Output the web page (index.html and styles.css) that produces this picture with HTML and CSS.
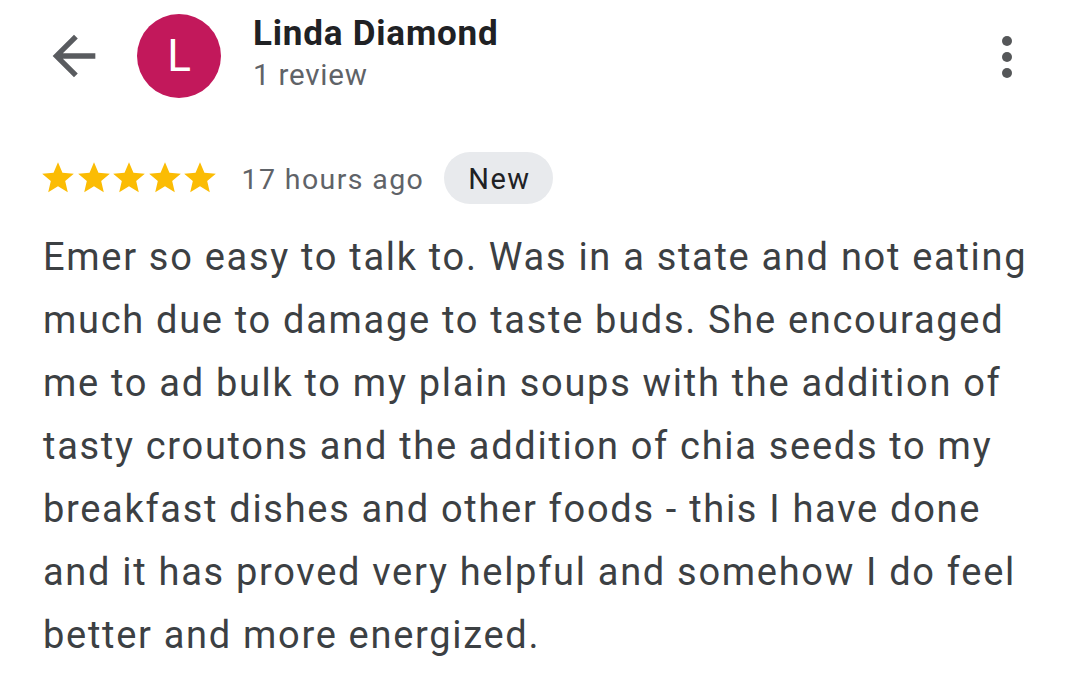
FILE: index.html
```html
<!DOCTYPE html>
<html>
<head>
<meta charset="utf-8">
<link rel="stylesheet" href="styles.css">
</head>
<body>
<div class="page">
  <header class="header">
    <div class="back">
      <svg width="64" height="64" viewBox="0 0 24 24"><path d="M20 11H7.83l5.59-5.59L12 4l-8 8 8 8 1.41-1.41L7.83 13H20v-2z" fill="#595b5f"/></svg>
    </div>
    <div class="avatar">L</div>
    <div class="who">
      <div class="name">Linda Diamond</div>
      <div class="count">1 review</div>
    </div>
    <div class="more">
      <span class="dot"></span><span class="dot"></span><span class="dot"></span>
    </div>
  </header>
  <div class="meta">
    <div class="stars">
      <svg class="star" viewBox="0 0 24 24"><path d="M12 17.27L18.18 21l-1.64-7.03L22 9.24l-7.19-.61L12 2 9.19 8.63 2 9.24l5.46 4.73L5.82 21z" fill="#fbbc04"/></svg>
      <svg class="star" viewBox="0 0 24 24"><path d="M12 17.27L18.18 21l-1.64-7.03L22 9.24l-7.19-.61L12 2 9.19 8.63 2 9.24l5.46 4.73L5.82 21z" fill="#fbbc04"/></svg>
      <svg class="star" viewBox="0 0 24 24"><path d="M12 17.27L18.18 21l-1.64-7.03L22 9.24l-7.19-.61L12 2 9.19 8.63 2 9.24l5.46 4.73L5.82 21z" fill="#fbbc04"/></svg>
      <svg class="star" viewBox="0 0 24 24"><path d="M12 17.27L18.18 21l-1.64-7.03L22 9.24l-7.19-.61L12 2 9.19 8.63 2 9.24l5.46 4.73L5.82 21z" fill="#fbbc04"/></svg>
      <svg class="star" viewBox="0 0 24 24"><path d="M12 17.27L18.18 21l-1.64-7.03L22 9.24l-7.19-.61L12 2 9.19 8.63 2 9.24l5.46 4.73L5.82 21z" fill="#fbbc04"/></svg>
    </div>
    <span class="time">17 hours ago</span>
    <span class="badge">New</span>
  </div>
  <p class="review">Emer so easy to talk to. Was in a state and not eating much due to damage to taste buds. She encouraged me to ad bulk to my plain soups with the addition of tasty croutons and the addition of chia seeds to my breakfast dishes and other foods - this I have done and it has proved very helpful and somehow I do feel better and more energized.</p>
</div>
</body>
</html>
```

FILE: styles.css
```css
* { box-sizing: border-box; }
html, body { margin: 0; padding: 0; background: #fff; }
body { font-family: Roboto, "Noto Sans", sans-serif; width: 1080px; height: 693px; overflow: hidden; }
.page { padding: 0 0 0 43px; }
.header { display: flex; align-items: center; height: 112px; }
.back { width: 64px; height: 64px; margin-left: -1px; display: flex; }
.avatar { width: 84px; height: 84px; border-radius: 50%; background: #c2185b; color: #fff; display: flex; align-items: center; justify-content: center; font-size: 44px; margin-left: 31px; }
.who { margin-left: 32px; display: flex; flex-direction: column; margin-top: -2px; }
.name { font-size: 35px; font-weight: 700; color: #202124; line-height: 40px; letter-spacing: 0.8px; }
.count { font-size: 29.5px; color: #5f6368; line-height: 42px; letter-spacing: 0.8px; }
.more { margin-left: auto; margin-right: 68px; display: flex; flex-direction: column; gap: 6px; margin-top: 1px; }
.dot { width: 10px; height: 10px; border-radius: 50%; background: #555759; }
.meta { display: flex; align-items: center; margin-top: 40px; height: 52px; }
.stars { display: flex; margin-left: -4px; }
.star { width: 38px; height: 38px; margin-right: -2.5px; }
.time { font-size: 28.5px; color: #5f6368; margin-left: 25px; letter-spacing: 1.4px; margin-top: 2px; }
.badge { margin-left: 20px; background: #e8eaed; color: #202124; font-size: 29px; font-weight: 400; letter-spacing: 1.5px; border-radius: 26px; height: 52px; padding: 2px 22px 0 24px; display: flex; align-items: center; }
.review { margin: 22px 0 0 0; width: 1000px; font-size: 38px; line-height: 63px; letter-spacing: 1.7px; color: #3c4043; }
```
